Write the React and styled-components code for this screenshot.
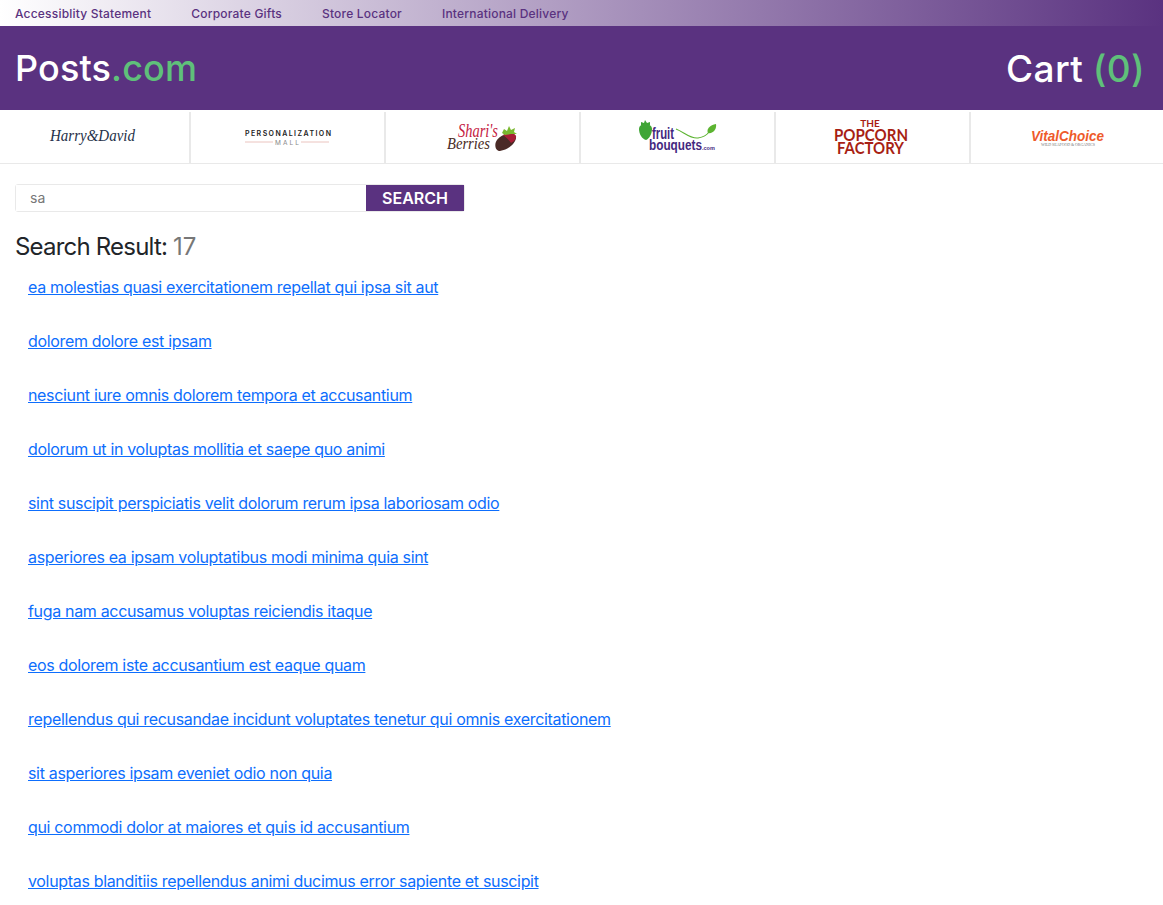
import styled, { createGlobalStyle } from 'styled-components';

const GlobalStyle = createGlobalStyle`
  body {
    margin: 0;
    background: #fff;
    color: #212529;
    font-family: Inter, "Noto Sans", sans-serif;
  }
  svg {
    overflow: visible;
  }
`;

const TopBar = styled.div`
  height: 26px;
  display: flex;
  align-items: center;
  gap: 40px;
  padding: 0 15px;
  background: linear-gradient(90deg, #fff 0%, #5a3280 100%);
`;

const TopLink = styled.a`
  font-size: 12px;
  font-weight: 500;
  letter-spacing: 0.2px;
  color: #5a3280;
`;

const Header = styled.header`
  height: 84px;
  display: flex;
  align-items: center;
  justify-content: space-between;
  padding: 0 18px 0 15px;
  background: #5a3280;
  color: #fff;
  font-size: 36px;
  font-weight: 450;
  letter-spacing: 0.15px;
`;

const Cart = styled.div`
  font-size: 37px;
  letter-spacing: 0.4px;
  word-spacing: -1px;
`;

const Green = styled.span`
  color: #5fc07a;
`;

const Brands = styled.nav`
  display: grid;
  grid-template-columns: 191px repeat(4, 195px) 1fr;
  height: 54px;
  padding-top: 2px;
  box-sizing: border-box;
  border-bottom: 1px solid #e9e9e9;
`;

const Brand = styled.div`
  display: flex;
  align-items: center;
  justify-content: center;
  border-right: 2px solid #e9e9e9;
  &:last-child {
    border-right: 0;
  }
`;

const Main = styled.main`
  padding: 20px 15px 0;
`;

const SearchForm = styled.form`
  width: 450px;
  height: 28px;
  box-sizing: border-box;
  display: flex;
  border: 1px solid #e9e9e9;
  border-radius: 3px;
`;

const SearchInput = styled.input`
  flex: 1;
  min-width: 0;
  border: 0;
  outline: 0;
  padding: 0 14px 2px;
  font: 14px Inter, sans-serif;
  color: #777;
`;

const SearchButton = styled.button`
  width: 98px;
  border: 0;
  padding: 0;
  background: #5a3280;
  color: #fff;
  font: 600 16px Inter, sans-serif;
`;

const ResultTitle = styled.h2`
  margin: 20px 0 4px;
  font-size: 24px;
  line-height: 30px;
  font-weight: 400;
  letter-spacing: -0.8px;
`;

const Count = styled.span`
  color: #777;
  letter-spacing: 0;
`;

const ResultList = styled.ul`
  list-style: none;
  margin: 0;
  padding: 0 0 0 13px;
`;

const ResultItem = styled.li`
  height: 54px;
  padding-top: 9px;
  box-sizing: border-box;
  font-size: 16px;
  line-height: 24px;
  letter-spacing: -0.33px;
`;

const ResultLink = styled.a`
  color: #0d6efd;
  text-decoration: underline;
`;

const HarryDavid = () => (
  <svg width="90" height="24" viewBox="0 0 90 24">
    <text x="0" y="15" fontFamily="Liberation Serif, serif" fontStyle="italic" fontSize="17" fill="#26324a" textLength="85" lengthAdjust="spacingAndGlyphs">Harry&amp;David</text>
  </svg>
);

const PersonalizationMall = () => (
  <svg width="90" height="24" viewBox="0 0 90 24">
    <text x="2" y="10" fontFamily="Inter, sans-serif" fontWeight="600" fontSize="7" fill="#222" textLength="86">PERSONALIZATION</text>
    <path d="M2 16H30M58 16H86" stroke="#e6b5ae" strokeWidth="0.8" />
    <text x="32" y="18.5" fontFamily="Inter, sans-serif" fontSize="6.5" fill="#888" textLength="24">MALL</text>
  </svg>
);

const SharisBerries = () => (
  <svg width="76" height="30" viewBox="0 0 76 30">
    <text x="13" y="14" fontFamily="Liberation Serif, serif" fontStyle="italic" fontSize="18" fill="#c4203f" textLength="40" lengthAdjust="spacingAndGlyphs">Shari's</text>
    <text x="2" y="26" fontFamily="Liberation Serif, serif" fontStyle="italic" fontSize="16" fill="#4a2c26" textLength="43" lengthAdjust="spacingAndGlyphs">Berries</text>
    <path d="M52 17C56 11 66 9 71 13C72 19 64 27 55 28C50 28 49 21 52 17Z" fill="#4a2a26" />
    <path d="M58 12C62 9 69 9 71 13C71 17 68 19 66 20C64 17 61 14 58 12Z" fill="#a81d36" />
    <path d="M57 10L59 6L62 8L64 3L66 7L70 5L69 9L72 11L66 11L60 12Z" fill="#79b82e" />
  </svg>
);

const FruitBouquets = () => (
  <svg width="80" height="36" viewBox="0 0 80 36">
    <path d="M1 9C1 5 5 4 7 4C10 4 14 5 14 9C14 14 11 19 8 20C4 19 1 14 1 9Z" fill="#3fa535" />
    <path d="M3 5L3 2L6 3L7 0L9 3L12 2L12 5Z" fill="#3fa535" />
    <text x="14" y="19" fontFamily="Liberation Sans, sans-serif" fontWeight="700" fontSize="16" fill="#44287f" textLength="22" lengthAdjust="spacingAndGlyphs">fruit</text>
    <text x="11" y="30" fontFamily="Liberation Sans, sans-serif" fontWeight="700" fontSize="15" fill="#44287f" textLength="53" lengthAdjust="spacingAndGlyphs">bouquets</text>
    <text x="64" y="30" fontFamily="Liberation Sans, sans-serif" fontWeight="700" fontSize="5.5" fill="#44287f">.com</text>
    <path d="M38 9C46 12 52 19 60 18C66 17 69 15 71 12" fill="none" stroke="#5cb431" strokeWidth="1.1" />
    <path d="M70 13C68 9 72 5 78 4C79 9 75 14 70 13Z" fill="#5cb431" />
  </svg>
);

const PopcornFactory = () => (
  <svg width="76" height="40" viewBox="0 0 76 40">
    <text x="35" y="9" textAnchor="middle" fontFamily="Lato, sans-serif" fontWeight="700" fontSize="10" fill="#a81f14">THE</text>
    <text x="-1" y="23" fontFamily="Lato, sans-serif" fontWeight="700" fontSize="17" fill="#a81f14" textLength="74" lengthAdjust="spacingAndGlyphs">POPCORN</text>
    <text x="2" y="36" fontFamily="Lato, sans-serif" fontWeight="700" fontSize="17" fill="#a81f14" textLength="67" lengthAdjust="spacingAndGlyphs">FACTORY</text>
  </svg>
);

const VitalChoice = () => (
  <svg width="76" height="20" viewBox="0 0 76 20">
    <text x="2" y="12.5" fontFamily="Liberation Sans, sans-serif" fontStyle="italic" fontWeight="700" fontSize="14" fill="#ee5a2a" textLength="73" lengthAdjust="spacingAndGlyphs">VitalChoice</text>
    <text x="12" y="18" fontFamily="Liberation Serif, serif" fontSize="4" fill="#777" textLength="54">WILD SEAFOOD &amp; ORGANICS</text>
  </svg>
);

const results = [
  'ea molestias quasi exercitationem repellat qui ipsa sit aut',
  'dolorem dolore est ipsam',
  'nesciunt iure omnis dolorem tempora et accusantium',
  'dolorum ut in voluptas mollitia et saepe quo animi',
  'sint suscipit perspiciatis velit dolorum rerum ipsa laboriosam odio',
  'asperiores ea ipsam voluptatibus modi minima quia sint',
  'fuga nam accusamus voluptas reiciendis itaque',
  'eos dolorem iste accusantium est eaque quam',
  'repellendus qui recusandae incidunt voluptates tenetur qui omnis exercitationem',
  'sit asperiores ipsam eveniet odio non quia',
  'qui commodi dolor at maiores et quis id accusantium',
  'voluptas blanditiis repellendus animi ducimus error sapiente et suscipit',
];

export default function App() {
  return (
    <>
      <GlobalStyle />
      <TopBar>
        <TopLink>Accessiblity Statement</TopLink>
        <TopLink>Corporate Gifts</TopLink>
        <TopLink>Store Locator</TopLink>
        <TopLink>International Delivery</TopLink>
      </TopBar>
      <Header>
        <div>Posts<Green>.com</Green></div>
        <Cart>Cart <Green>(0)</Green></Cart>
      </Header>
      <Brands>
        <Brand><HarryDavid /></Brand>
        <Brand><PersonalizationMall /></Brand>
        <Brand><SharisBerries /></Brand>
        <Brand><FruitBouquets /></Brand>
        <Brand><PopcornFactory /></Brand>
        <Brand><VitalChoice /></Brand>
      </Brands>
      <Main>
        <SearchForm onSubmit={(e) => e.preventDefault()}>
          <SearchInput defaultValue="sa" />
          <SearchButton>SEARCH</SearchButton>
        </SearchForm>
        <ResultTitle>Search Result: <Count>17</Count></ResultTitle>
        <ResultList>
          {results.map((title) => (
            <ResultItem key={title}>
              <ResultLink href="#">{title}</ResultLink>
            </ResultItem>
          ))}
        </ResultList>
      </Main>
    </>
  );
}
